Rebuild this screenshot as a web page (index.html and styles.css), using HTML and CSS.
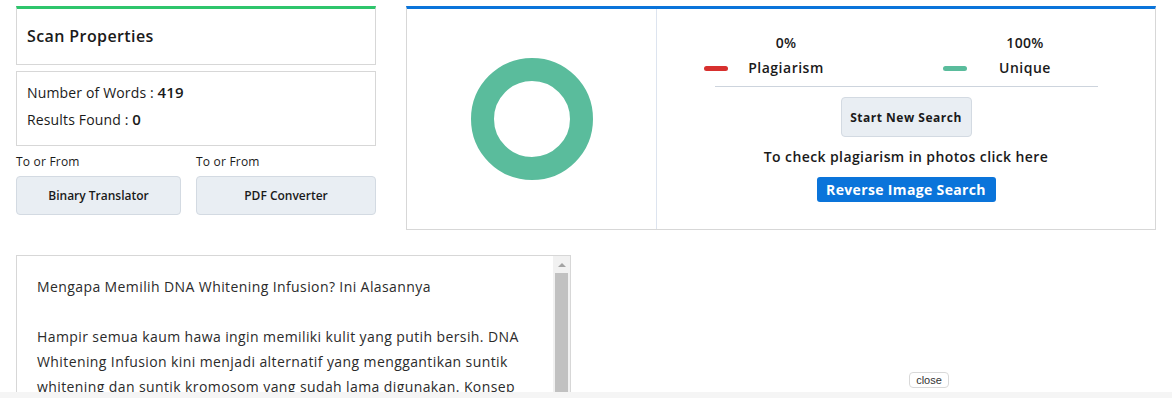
FILE: index.html
```html
<!DOCTYPE html>
<html lang="en">
<head>
<meta charset="utf-8">
<title>Plagiarism Result</title>
<link rel="stylesheet" href="styles.css">
</head>
<body>
<div class="page">
  <div class="top-row">
    <div class="left-col">
      <div class="card card-green">
        <h2 class="card-title">Scan Properties</h2>
      </div>
      <div class="card stats">
        <p class="stat">Number of Words : <span class="num">419</span></p>
        <p class="stat">Results Found : <span class="num">0</span></p>
      </div>
      <div class="tools">
        <div class="tool">
          <span class="tool-label">To or From</span>
          <button class="btn-light tool-btn">Binary Translator</button>
        </div>
        <div class="tool">
          <span class="tool-label">To or From</span>
          <button class="btn-light tool-btn">PDF Converter</button>
        </div>
      </div>
    </div>

    <div class="result-panel">
      <div class="chart-side">
        <svg class="donut" width="124" height="124" viewBox="0 0 124 124">
          <circle cx="62" cy="62" r="49.5" fill="none" stroke="#5abc9c" stroke-width="23"/>
        </svg>
      </div>
      <div class="info-side">
        <div class="legend">
          <div class="legend-item">
            <span class="pct">0%</span>
            <span class="dash dash-red"></span>
            <span class="legend-label">Plagiarism</span>
          </div>
          <div class="legend-item">
            <span class="pct">100%</span>
            <span class="dash dash-green"></span>
            <span class="legend-label">Unique</span>
          </div>
        </div>
        <hr class="divider">
        <button class="btn-light new-search">Start New Search</button>
        <p class="photo-text">To check plagiarism in photos click here</p>
        <button class="btn-blue">Reverse Image Search</button>
      </div>
    </div>
  </div>

  <div class="text-box">
    <div class="text-content">
      <p>Mengapa Memilih DNA Whitening Infusion? Ini Alasannya</p>
      <p>&nbsp;</p>
      <p>Hampir semua kaum hawa ingin memiliki kulit yang putih bersih. DNA Whitening Infusion kini menjadi alternatif yang menggantikan suntik whitening dan suntik kromosom yang sudah lama digunakan. Konsep perawatan ini bekerja dari dalam tubuh sehingga hasilnya terlihat lebih merata dan tahan lama.</p>
    </div>
    <div class="scrollbar">
      <span class="scroll-up"></span>
      <span class="scroll-thumb"></span>
    </div>
  </div>
</div>

<div class="bottom-bar">
  <button class="close-btn">close</button>
</div>
</body>
</html>
```

FILE: styles.css
```css
* { box-sizing: border-box; }

html, body {
  margin: 0;
  padding: 0;
  background: #ffffff;
  font-family: "Open Sans", "Liberation Sans", sans-serif;
  color: #1a1a1a;
  overflow: hidden;
}

.page {
  padding: 6px 16px 0 16px;
}

.top-row {
  display: flex;
  gap: 30px;
  align-items: flex-start;
}

.left-col {
  width: 360px;
  display: flex;
  flex-direction: column;
}

.card {
  border: 1px solid #d7d7d7;
  background: #fff;
}

.card-green {
  border-top: 3px solid #2ec56c;
  height: 59px;
  padding: 16px 10px 0 10px;
}

.card-title {
  margin: 0;
  font-size: 16px;
  font-weight: 600;
  line-height: 22px;
  letter-spacing: 0.4px;
  color: #1a1a1a;
}

.stats {
  margin-top: 6px;
  height: 75px;
  padding: 7px 10px 0 10px;
}

.stat {
  margin: 0;
  font-size: 14px;
  font-weight: 500;
  line-height: 27px;
  letter-spacing: 0.15px;
  color: #1a1a1a;
}

.stat .num {
  font-size: 15px;
  font-weight: 600;
}

.tools {
  display: flex;
  gap: 15px;
  margin-top: 7px;
}

.tool {
  display: flex;
  flex-direction: column;
}

.tool:first-child { width: 165px; }
.tool:last-child { width: 180px; }

.tool-label {
  font-size: 12px;
  line-height: 17px;
  letter-spacing: 0.2px;
  color: #1a1a1a;
}

.btn-light {
  background: #e9eef3;
  border: 1px solid #d3dae2;
  border-radius: 4px;
  font-family: inherit;
  color: #1a1a1a;
  cursor: pointer;
}

.tool-btn {
  margin-top: 6px;
  height: 39px;
  width: 100%;
  font-size: 12px;
  font-weight: 600;
}

.result-panel {
  width: 750px;
  height: 224px;
  border: 1px solid #d7d7d7;
  border-top: 3px solid #0a74da;
  display: flex;
}

.chart-side {
  width: 250px;
  border-right: 1px solid #dde4ef;
  display: flex;
  align-items: center;
  justify-content: center;
}

.info-side {
  flex: 1;
  display: flex;
  flex-direction: column;
  align-items: center;
  padding-top: 24px;
}

.legend {
  display: flex;
  gap: 39px;
  width: 100%;
  padding-left: 47px;
}

.legend-item {
  width: 200px;
  display: grid;
  grid-template-columns: 24px 116px;
  grid-template-rows: 20px 20px;
  row-gap: 5px;
}

.pct {
  grid-column: 2;
  grid-row: 1;
  text-align: center;
  font-size: 14px;
  font-weight: 600;
  line-height: 20px;
  letter-spacing: 0.3px;
}

.legend-label {
  grid-column: 2;
  grid-row: 2;
  text-align: center;
  font-size: 14px;
  font-weight: 600;
  line-height: 20px;
  letter-spacing: 0.5px;
}

.dash {
  grid-column: 1;
  grid-row: 2;
  align-self: center;
  height: 5px;
  border-radius: 3px;
}

.dash-red { background: #d7302e; }
.dash-green { background: #5abc9c; }

.divider {
  width: 383px;
  border: none;
  border-top: 1px solid #cdd4dd;
  margin: 8px 0 10px 0;
}

.new-search {
  width: 131px;
  height: 40px;
  font-size: 12px;
  font-weight: 700;
  letter-spacing: 0.5px;
}

.photo-text {
  margin: 10px 0 0 0;
  font-size: 14px;
  font-weight: 600;
  line-height: 19px;
  letter-spacing: 0.4px;
  color: #1a1a1a;
}

.btn-blue {
  margin-top: 11px;
  width: 179px;
  height: 25px;
  background: #0a74da;
  color: #fff;
  border: none;
  border-radius: 3px;
  font-family: inherit;
  font-size: 14px;
  font-weight: 700;
  letter-spacing: 0.35px;
  cursor: pointer;
}

.text-box {
  margin-top: 25px;
  width: 555px;
  height: 420px;
  border: 1px solid #d7d7d7;
  display: flex;
}

.text-content {
  flex: 1;
  overflow: hidden;
  padding: 18px 0 18px 20px;
  font-size: 14px;
  line-height: 25px;
  letter-spacing: 0.4px;
  color: #2b2b2b;
  font-weight: 400;
}

.text-content p {
  margin: 0;
}

.scrollbar {
  width: 17px;
  background: #f1f1f1;
  display: flex;
  flex-direction: column;
  align-items: center;
}

.scroll-up {
  height: 17px;
  width: 17px;
  display: flex;
  align-items: center;
  justify-content: center;
}

.scroll-up::before {
  content: "";
  width: 0;
  height: 0;
  border-left: 4px solid transparent;
  border-right: 4px solid transparent;
  border-bottom: 4px solid #a3a3a3;
}

.scroll-thumb {
  width: 13px;
  height: 300px;
  background: #c1c1c1;
}

.bottom-bar {
  position: fixed;
  left: 0;
  right: 0;
  bottom: 0;
  height: 6px;
  background: #f5f5f5;
}

.close-btn {
  position: absolute;
  left: 909px;
  bottom: 10px;
  height: 16px;
  width: 40px;
  padding: 0;
  background: #fff;
  border: 1px solid #d9d9d9;
  border-radius: 4px;
  font-family: "Liberation Sans", Arial, sans-serif;
  font-size: 11px;
  line-height: 14px;
  color: #333;
}
```
